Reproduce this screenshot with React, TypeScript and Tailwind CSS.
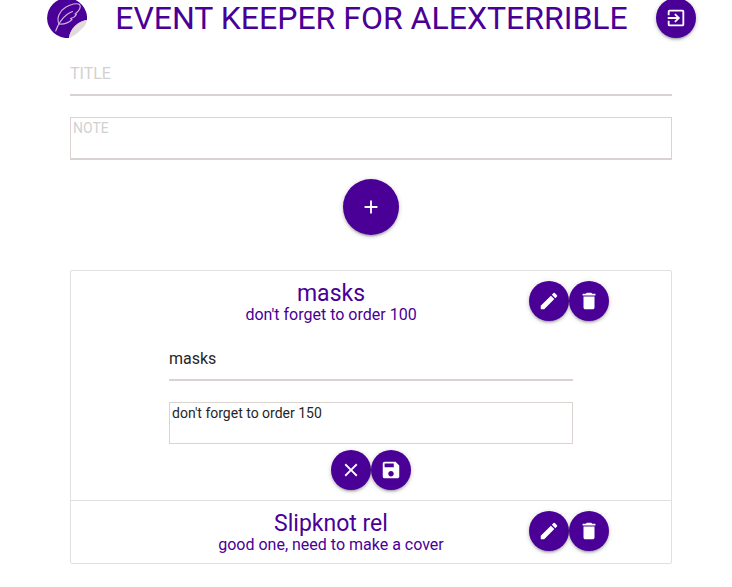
import { useState } from "react";
import type { ReactNode } from "react";
import { MdAdd, MdClose, MdDelete, MdEdit, MdExitToApp, MdSave } from "react-icons/md";

const notes = [
  { id: 1, title: "masks", text: "don't forget to order 100", editing: true },
  { id: 2, title: "Slipknot rel", text: "good one, need to make a cover", editing: false },
];

function RoundButton({ label, large = false, children }: { label: string; large?: boolean; children: ReactNode }) {
  return (
    <button
      type="button"
      aria-label={label}
      className={`flex shrink-0 items-center justify-center rounded-full bg-[#4a0096] text-white shadow-[0_2px_2px_0_rgba(0,0,0,0.14),0_3px_1px_-2px_rgba(0,0,0,0.12),0_1px_5px_0_rgba(0,0,0,0.2)] ${
        large ? "size-14" : "size-10"
      }`}
    >
      {children}
    </button>
  );
}

function Logo() {
  return (
    <svg viewBox="0 0 40 40" className="size-10 shrink-0" role="img" aria-label="Event Keeper">
      <path d="M22 40A20 20 0 1 1 40 22C31 23 23 31 22 40Z" fill="#4a0096" />
      <path d="M22 40C23 31 31 23 40 22C39 27 37 29 34.500 31C31 35 27 38 22 40Z" fill="#e2d9dc" />
      <g fill="none" stroke="#cdb5e3" strokeWidth="1.1" strokeLinecap="round" strokeLinejoin="round">
        <path d="M8.700 33C10.500 28 14 21 20 16.500C22 15 24 14 25.500 13.500" />
        <path d="M12 26C9 20 13 12.500 19 9C23.500 6.500 30 4.500 32.500 6.500C34.500 9 32 13.500 28 16L29.500 16.300C28 19 26 20 23.500 20.500L25 21.500C21.500 25 17 26.500 12 26Z" />
      </g>
    </svg>
  );
}

function NoteFields({ title = "", text = "", thick = false }: { title?: string; text?: string; thick?: boolean }) {
  const [titleValue, setTitleValue] = useState(title);
  const [textValue, setTextValue] = useState(text);
  return (
    <>
      <input
        aria-label="Title"
        value={titleValue}
        onChange={(e) => setTitleValue(e.target.value)}
        placeholder="TITLE"
        className="block h-[45px] w-full border-b-2 border-[#dbd3d2] pt-0.5 text-base text-[#262626] outline-none placeholder:text-[#d1d1d1]"
      />
      <textarea
        aria-label="Note"
        value={textValue}
        onChange={(e) => setTextValue(e.target.value)}
        placeholder="NOTE"
        className={`mt-[21px] block w-full resize-none overflow-hidden border border-[#dbd3d2] px-0.5 text-sm text-[#262626] outline-none placeholder:text-[#d1d1d1] ${
          thick ? "h-[43px] border-b-2" : "h-[42px]"
        }`}
      />
    </>
  );
}

export default function App() {
  return (
    <div className="bg-white pb-6 font-[Roboto,sans-serif] text-[#4a0096]">
      <header className="-mt-0.5 flex h-10 items-center justify-between pr-9 pl-[47px]">
        <Logo />
        <h1 className="text-[32px] leading-10 whitespace-nowrap">EVENT KEEPER FOR ALEXTERRIBLE</h1>
        <RoundButton label="Log out">
          <MdExitToApp size={22} />
        </RoundButton>
      </header>

      <main className="mt-[13px] mr-[60px] ml-[70px]">
        <form>
          <NoteFields thick />
          <div className="mt-[19px] flex justify-center">
            <RoundButton label="Add note" large>
              <MdAdd size={22} />
            </RoundButton>
          </div>
        </form>

        <ul className="mt-[35px] divide-y divide-[#e0e0e0] rounded-xs border border-[#e0e0e0]">
          {notes.map((note) => (
            <li key={note.id} className="py-2.5">
              <div className="flex h-[42px] items-start px-[62px]">
                <div className="flex-1 text-center">
                  <h2 className="text-[23px] leading-[26px]">{note.title}</h2>
                  <p className="text-base leading-4">{note.text}</p>
                </div>
                <RoundButton label={`Edit ${note.title}`}>
                  <MdEdit size={22} />
                </RoundButton>
                <RoundButton label={`Delete ${note.title}`}>
                  <MdDelete size={22} />
                </RoundButton>
              </div>
              {note.editing && (
                <form className="mt-[13px] px-[98px]">
                  <NoteFields title={note.title} text="don't forget to order 150" />
                  <div className="mt-1.5 flex justify-center">
                    <RoundButton label="Cancel">
                      <MdClose size={22} />
                    </RoundButton>
                    <RoundButton label="Save">
                      <MdSave size={22} />
                    </RoundButton>
                  </div>
                </form>
              )}
            </li>
          ))}
        </ul>
      </main>
    </div>
  );
}
